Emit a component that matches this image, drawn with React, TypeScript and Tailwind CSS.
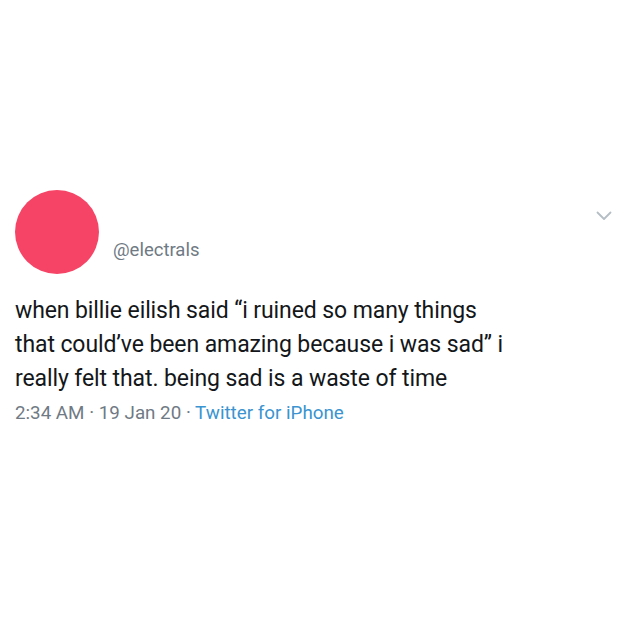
export default function App() {
  return (
    <div
      className="w-[622px] h-[622px] bg-white overflow-hidden"
      style={{ fontFamily: 'Roboto, "Liberation Sans", sans-serif' }}
    >
      <div className="pt-[190px] px-[15px]">
        <div className="flex items-start">
          <div className="w-[84px] h-[84px] rounded-full bg-[#f64466] shrink-0" />
          <div className="ml-[14px] mt-[49px] text-[18.5px] leading-[22px] text-[#6f7a84]">
            @electrals
          </div>
          <div className="ml-auto mt-[21px] mr-[-5px]">
            <svg width="16" height="10" viewBox="0 0 16 10" fill="none">
              <path d="M1.5 1.5 L8 8 L14.5 1.5" stroke="#b6bec5" strokeWidth="1.8" strokeLinecap="round" strokeLinejoin="round" />
            </svg>
          </div>
        </div>
        <p className="mt-[20px] w-[503px] text-[23px] leading-[34px] text-[#14171a] tracking-[-0.1px]">
          when billie eilish said “i ruined so many things that could’ve been amazing because i was sad” i really felt that. being sad is a waste of time
        </p>
        <div className="mt-[6px] text-[18.8px] leading-[22px] text-[#6f7a84]">
          2:34 AM · 19 Jan 20 · <span className="text-[#3b94d0]">Twitter for iPhone</span>
        </div>
      </div>
    </div>
  );
}
